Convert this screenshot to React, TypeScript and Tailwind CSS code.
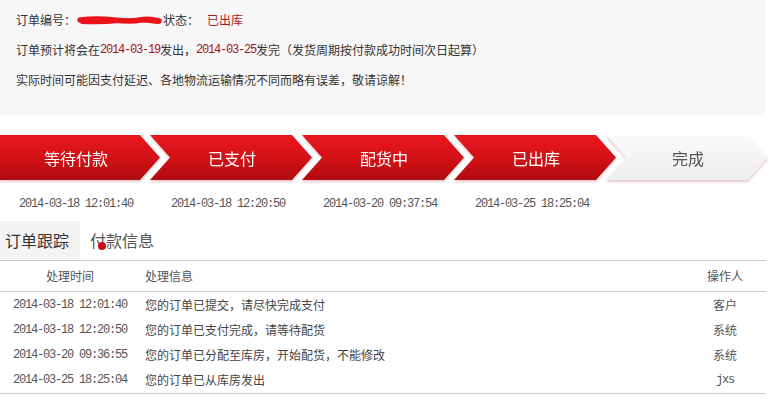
import React from "react";

const steps = [
  { label: "等待付款", time: "2014-03-18 12:01:40", done: true },
  { label: "已支付", time: "2014-03-18 12:20:50", done: true },
  { label: "配货中", time: "2014-03-20 09:37:54", done: true },
  { label: "已出库", time: "2014-03-25 18:25:04", done: true },
  { label: "完成", time: "", done: false },
];

const rows = [
  { t: "2014-03-18 12:01:40", m: "您的订单已提交，请尽快完成支付", o: "客户", mono: false },
  { t: "2014-03-18 12:20:50", m: "您的订单已支付完成，请等待配货", o: "系统", mono: false },
  { t: "2014-03-20 09:36:55", m: "您的订单已分配至库房，开始配货，不能修改", o: "系统", mono: false },
  { t: "2014-03-25 18:25:04", m: "您的订单已从库房发出", o: "jxs", mono: true },
];

const mono = "font-['Liberation_Mono',monospace] tracking-[-1.2px]";

export default function App() {
  return (
    <div className="w-[771px] bg-white font-['Noto_Sans_CJK_SC',sans-serif] text-[12px]">
      <div className="w-[766px]">
        {/* Top info box */}
        <div className="h-[115px] bg-[#f7f7f7] px-[16px] pt-[5px] text-[#333]">
          <div className="flex h-[30px] items-center leading-[30px]">
            <span>订单编号：</span>
            <svg width="87" height="10" viewBox="0 0 87 10" className="mt-[1px]">
              <path d="M4 4 Q20 2 38 4 T64 4 T83 5" stroke="#e8141a" strokeWidth="5.5" strokeLinecap="round" fill="none" />
              <path d="M6 6 Q24 7 44 5 T82 6" stroke="#e8141a" strokeWidth="4" strokeLinecap="round" fill="none" />
            </svg>
            <span>状态：</span>
            <span className="ml-[8px] text-[#b0161b]">已出库</span>
          </div>
          <div className="flex h-[30px] items-center leading-[30px]">
            <span>订单预计将会在</span>
            <span className={`${mono} text-[#a3141a]`}>2014-03-19</span>
            <span>发出，</span>
            <span className={`${mono} text-[#a3141a]`}>2014-03-25</span>
            <span>发完（发货周期按付款成功时间次日起算）</span>
          </div>
          <div className="flex h-[30px] items-center leading-[30px]">
            <span>实际时间可能因支付延迟、各地物流运输情况不同而略有误差，敬请谅解！</span>
          </div>
        </div>

        {/* Steps */}
        <div className="mt-[20px] flex h-[45px] drop-shadow-[0_2px_1px_rgba(140,20,20,0.22)]">
          {steps.map((s, i) => (
            <div
              key={s.label}
              className={`flex h-[45px] shrink-0 items-center justify-center text-[16px] ${
                i === 0
                  ? "w-[160px] pr-[8px] [clip-path:polygon(0_0,140px_0,160px_50%,140px_100%,0_100%)]"
                  : "-ml-[10px] w-[162px] pl-[2px] [clip-path:polygon(0_0,142px_0,162px_50%,142px_100%,0_100%,20px_50%)]"
              } ${
                s.done
                  ? "bg-[linear-gradient(to_bottom,#e9181e,#d11116_55%,#b00b0f)] text-white"
                  : "bg-[linear-gradient(to_bottom,#fbfbfb,#eeeeee)] text-[#555]"
              }`}
            >
              {s.label}
            </div>
          ))}
        </div>

        {/* Times */}
        <div className="mt-[15px] flex h-[18px] pl-[19px] text-[12px] leading-[18px] text-[#555]">
          {steps.slice(0, 4).map((s) => (
            <div key={s.label} className={`w-[152px] shrink-0 ${mono}`}>
              {s.time}
            </div>
          ))}
        </div>

        {/* Tabs */}
        <div className="relative mt-[8px] flex h-[40px] border-b border-[#cccccc]">
          <div className="w-[80px] bg-[#f4f4f4] pl-[5px] text-[16px] leading-[39px] text-[#333]">订单跟踪</div>
          <div className="ml-[10px] text-[16px] leading-[39px] text-[#555]">付款信息</div>
          <div className="absolute left-[98px] top-[21px] h-[8px] w-[8px] rounded-full bg-[#c8101a]" />
        </div>

        {/* Table */}
        <div className="flex h-[31px] items-center border-b border-[#cccccc] text-[#555]">
          <div className="w-[140px] text-center">处理时间</div>
          <div className="ml-[5px] flex-1">处理信息</div>
          <div className="w-[82px] text-center">操作人</div>
        </div>
        <div className="border-b border-[#cccccc] pb-[1px]">
          {rows.map((r) => (
            <div key={r.t} className="flex h-[25px] items-center">
              <div className={`w-[140px] text-center text-[#555] ${mono}`}>{r.t}</div>
              <div className="ml-[5px] flex-1 text-[#444]">{r.m}</div>
              <div className={`w-[82px] text-center text-[#555] ${r.mono ? mono : ""}`}>{r.o}</div>
            </div>
          ))}
        </div>
      </div>
    </div>
  );
}
